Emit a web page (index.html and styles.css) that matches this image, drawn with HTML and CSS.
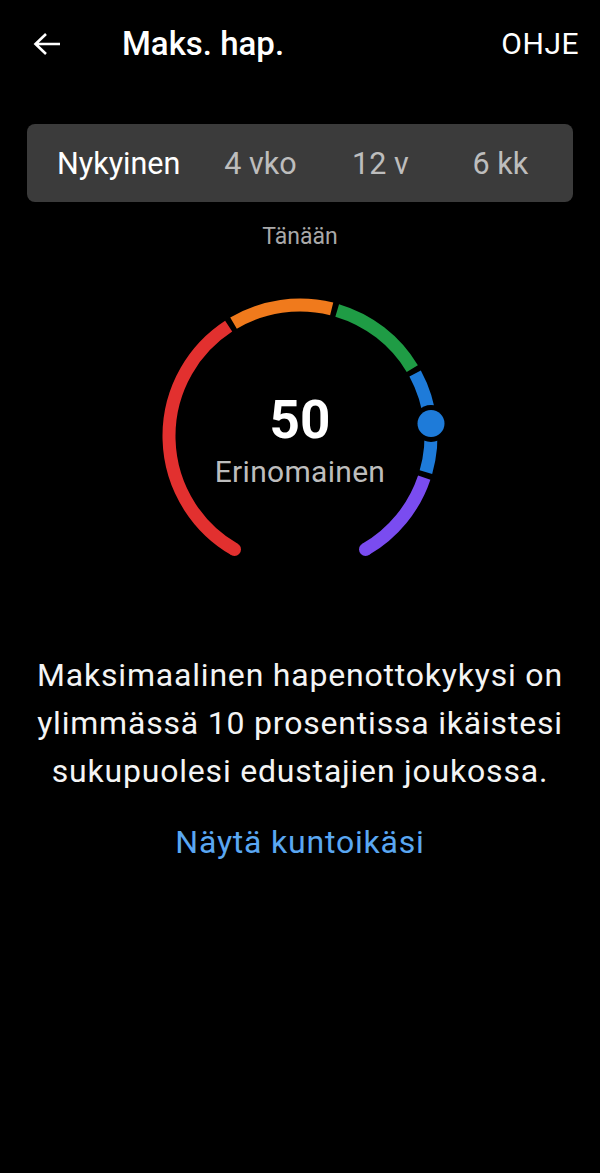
FILE: index.html
```html
<!DOCTYPE html>
<html lang="fi">
<head>
<meta charset="utf-8">
<title>Maks. hap.</title>
<link rel="stylesheet" href="styles.css">
</head>
<body>
<header class="topbar">
  <svg class="back" viewBox="0 0 28 24" width="28" height="24" aria-hidden="true">
    <path d="M27 12H2.5M13 2L2.5 12L13 22" fill="none" stroke="#fff" stroke-width="2.6" stroke-linecap="butt" stroke-linejoin="miter"/>
  </svg>
  <h1 class="title">Maks. hap.</h1>
  <span class="help">OHJE</span>
</header>

<nav class="tabs">
  <span class="tab active">Nykyinen</span>
  <span class="tab">4 vko</span>
  <span class="tab">12 v</span>
  <span class="tab">6 kk</span>
</nav>

<div class="date">Tänään</div>

<div class="gauge">
  <svg class="gauge-svg" viewBox="0 0 300 300" width="300" height="300" aria-hidden="true">
    <g fill="none" stroke-width="13">
      <path d="M84.5 263.45 A131 131 0 0 1 78.66 40.13" stroke="#e2302f"/>
      <path d="M83.52 37.13 A131 131 0 0 1 181.69 22.89" stroke="#f07a1c"/>
      <path d="M187.2 24.4 A131 131 0 0 1 262.29 82.53" stroke="#1f9c45"/>
      <path d="M265.12 87.49 A131 131 0 0 1 275.93 186.1" stroke="#1e7bd9"/>
      <path d="M274.23 191.57 A131 131 0 0 1 215.5 263.45" stroke="#7a4cf0"/>
    </g>
    <circle cx="84.5" cy="263.45" r="6.5" fill="#e2302f"/>
    <circle cx="215.5" cy="263.45" r="6.5" fill="#7a4cf0"/>
    <circle cx="281" cy="137.5" r="18.5" fill="#000"/>
    <circle cx="281" cy="137.5" r="13.5" fill="#1e7bd9"/>
  </svg>
  <div class="gauge-label">
    <div class="value">50</div>
    <div class="rating">Erinomainen</div>
  </div>
</div>

<p class="summary">Maksimaalinen hapenottokykysi on ylimmässä 10 prosentissa ikäistesi sukupuolesi edustajien joukossa.</p>

<div class="link-row"><a class="link" href="#">Näytä kuntoikäsi</a></div>
</body>
</html>
```

FILE: styles.css
```css
html, body {
  margin: 0;
  padding: 0;
  background: #000;
}

body {
  width: 600px;
  min-height: 1173px;
  font-family: Roboto, "Noto Sans", "Liberation Sans", sans-serif;
  color: #fff;
}

.topbar {
  height: 88px;
  display: flex;
  align-items: center;
  padding: 0 21px 0 33px;
}

.back {
  display: block;
  flex: none;
  margin-right: 61px;
}

.title {
  margin: 0;
  font-size: 33px;
  font-weight: 500;
  line-height: 40px;
  flex: 1;
}

.help {
  font-size: 30px;
  font-weight: 400;
  letter-spacing: 0.5px;
  line-height: 40px;
}

.tabs {
  margin: 36px 27px 0;
  height: 78px;
  padding: 2px 10px 0;
  box-sizing: border-box;
  background: #3b3b3b;
  border-radius: 8px;
  display: flex;
  align-items: center;
}

.tab {
  min-width: 120px;
  padding: 0 20px;
  box-sizing: border-box;
  text-align: center;
  font-size: 30.5px;
  line-height: 40px;
  color: #bdbdbd;
}

.tab.active {
  color: #fff;
}

.date {
  margin-top: 22px;
  text-align: center;
  font-size: 23px;
  line-height: 26px;
  color: #a9a9a9;
}

.gauge {
  margin-top: 36px;
  display: grid;
  justify-content: center;
}

.gauge-svg,
.gauge-label {
  grid-area: 1 / 1;
}

.gauge-svg {
  display: block;
}

.gauge-label {
  align-self: start;
  padding-top: 104px;
  text-align: center;
}

.value {
  font-size: 53px;
  font-weight: 700;
  line-height: 60px;
  color: #fff;
}

.rating {
  margin-top: 4px;
  font-size: 30px;
  letter-spacing: 0.3px;
  line-height: 36px;
  color: #bdbdbd;
}

.summary {
  margin: 65px 0 0;
  padding: 0 24px;
  text-align: center;
  font-size: 32px;
  letter-spacing: 0.8px;
  line-height: 48px;
  color: #f4f4f4;
}

.link-row {
  margin-top: 23px;
  text-align: center;
  font-size: 32px;
  letter-spacing: 0.8px;
  line-height: 48px;
}

.link {
  color: #5aa7f2;
  text-decoration: none;
}
```
